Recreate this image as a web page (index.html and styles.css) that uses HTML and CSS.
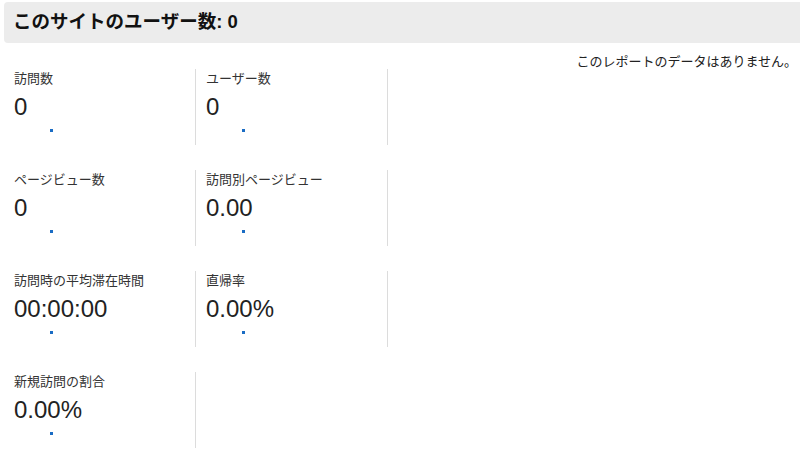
FILE: index.html
```html
<!DOCTYPE html>
<html lang="ja">
<head>
<meta charset="utf-8">
<title>このサイトのユーザー数</title>
<link rel="stylesheet" href="styles.css">
</head>
<body>
<div class="page">
  <div class="header"><h1 class="title">このサイトのユーザー数: 0</h1></div>
  <div class="notice">このレポートのデータはありません。</div>
  <div class="grid">
    <div class="cell"><div class="label">訪問数</div><div class="value">0</div><div class="spark"><span class="dot"></span></div></div>
    <div class="cell"><div class="label">ユーザー数</div><div class="value">0</div><div class="spark"><span class="dot"></span></div></div>
    <div class="cell"><div class="label">ページビュー数</div><div class="value">0</div><div class="spark"><span class="dot"></span></div></div>
    <div class="cell"><div class="label">訪問別ページビュー</div><div class="value">0.00</div><div class="spark"><span class="dot"></span></div></div>
    <div class="cell"><div class="label">訪問時の平均滞在時間</div><div class="value">00:00:00</div><div class="spark"><span class="dot"></span></div></div>
    <div class="cell"><div class="label">直帰率</div><div class="value">0.00%</div><div class="spark"><span class="dot"></span></div></div>
    <div class="cell"><div class="label">新規訪問の割合</div><div class="value">0.00%</div><div class="spark"><span class="dot"></span></div></div>
  </div>
</div>
</body>
</html>
```

FILE: styles.css
```css
html, body {
  margin: 0;
  padding: 0;
  background: #ffffff;
}

body {
  font-family: "Liberation Sans", "Noto Sans CJK JP", sans-serif;
  color: #222;
}

.page {
  padding: 2px 0 0 4px;
}

.header {
  height: 41px;
  background: #ececec;
  border-radius: 4px 0 0 4px;
  display: flex;
  align-items: center;
  padding-left: 9px;
}

.title {
  margin: 0;
  font-family: "Liberation Sans", "Noto Sans CJK JP", sans-serif;
  font-size: 18.5px;
  font-weight: bold;
  color: #111;
  line-height: 1;
}

.notice {
  margin-top: 9px;
  height: 17px;
  line-height: 17px;
  font-family: "Noto Sans CJK JP", sans-serif;
  font-size: 13px;
  color: #222;
  text-align: right;
  padding-right: 3px;
}

.grid {
  display: grid;
  grid-template-columns: 192px 192px;
  grid-auto-rows: 76px;
  row-gap: 25px;
}

.cell {
  box-sizing: border-box;
  border-right: 1px solid #dcdcdc;
  padding-left: 10px;
}

.label {
  font-family: "Noto Sans CJK JP", sans-serif;
  font-size: 13px;
  line-height: 18px;
  height: 18px;
  color: #333;
  margin-bottom: 6px;
}

.value {
  font-family: "Liberation Sans", sans-serif;
  font-size: 24px;
  line-height: 28px;
  color: #222;
}

.spark {
  height: 12px;
  padding-top: 8px;
}

.dot {
  display: block;
  width: 3px;
  height: 3px;
  margin-left: 36px;
  background: #1a6cc4;
}
```
